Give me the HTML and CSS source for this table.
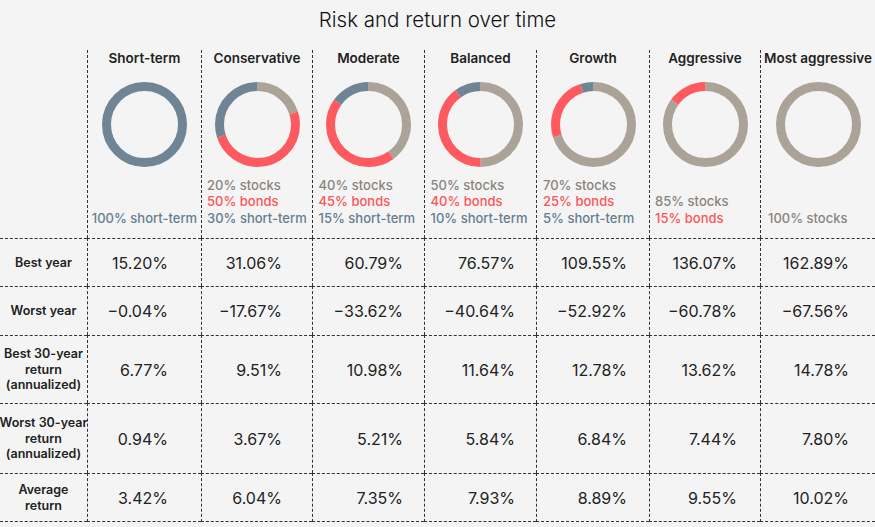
FILE: index.html
```html
<!DOCTYPE html>
<html lang="en">
<head>
<meta charset="utf-8">
<title>Risk and return over time</title>
<link rel="stylesheet" href="styles.css">
</head>
<body>
<div class="chart">
  <h1 class="title">Risk and return over time</h1>

  <div class="row head-row">
    <div class="cell corner"></div>

    <div class="cell mix">
      <div class="mix-name">Short-term</div>
      <svg class="donut" viewBox="0 0 85 85" width="85" height="85">
        <circle class="ring short" cx="42.5" cy="42.5" r="38"/>
      </svg>
      <div class="legend"><div class="legend-box">
        <span class="lg short">100% short-term</span>
      </div></div>
    </div>

    <div class="cell mix">
      <div class="mix-name">Conservative</div>
      <svg class="donut" viewBox="0 0 85 85" width="85" height="85">
        <g transform="rotate(-90 42.5 42.5)">
          <circle class="ring stocks" cx="42.5" cy="42.5" r="38" pathLength="100" stroke-dasharray="20 80" stroke-dashoffset="0"/>
          <circle class="ring bonds" cx="42.5" cy="42.5" r="38" pathLength="100" stroke-dasharray="50 50" stroke-dashoffset="-20"/>
          <circle class="ring short" cx="42.5" cy="42.5" r="38" pathLength="100" stroke-dasharray="30 70" stroke-dashoffset="-70"/>
        </g>
      </svg>
      <div class="legend"><div class="legend-box">
        <span class="lg stocks">20% stocks</span>
        <span class="lg bonds">50% bonds</span>
        <span class="lg short">30% short-term</span>
      </div></div>
    </div>

    <div class="cell mix">
      <div class="mix-name">Moderate</div>
      <svg class="donut" viewBox="0 0 85 85" width="85" height="85">
        <g transform="rotate(-90 42.5 42.5)">
          <circle class="ring stocks" cx="42.5" cy="42.5" r="38" pathLength="100" stroke-dasharray="40 60" stroke-dashoffset="0"/>
          <circle class="ring bonds" cx="42.5" cy="42.5" r="38" pathLength="100" stroke-dasharray="45 55" stroke-dashoffset="-40"/>
          <circle class="ring short" cx="42.5" cy="42.5" r="38" pathLength="100" stroke-dasharray="15 85" stroke-dashoffset="-85"/>
        </g>
      </svg>
      <div class="legend"><div class="legend-box">
        <span class="lg stocks">40% stocks</span>
        <span class="lg bonds">45% bonds</span>
        <span class="lg short">15% short-term</span>
      </div></div>
    </div>

    <div class="cell mix">
      <div class="mix-name">Balanced</div>
      <svg class="donut" viewBox="0 0 85 85" width="85" height="85">
        <g transform="rotate(-90 42.5 42.5)">
          <circle class="ring stocks" cx="42.5" cy="42.5" r="38" pathLength="100" stroke-dasharray="50 50" stroke-dashoffset="0"/>
          <circle class="ring bonds" cx="42.5" cy="42.5" r="38" pathLength="100" stroke-dasharray="40 60" stroke-dashoffset="-50"/>
          <circle class="ring short" cx="42.5" cy="42.5" r="38" pathLength="100" stroke-dasharray="10 90" stroke-dashoffset="-90"/>
        </g>
      </svg>
      <div class="legend"><div class="legend-box">
        <span class="lg stocks">50% stocks</span>
        <span class="lg bonds">40% bonds</span>
        <span class="lg short">10% short-term</span>
      </div></div>
    </div>

    <div class="cell mix">
      <div class="mix-name">Growth</div>
      <svg class="donut" viewBox="0 0 85 85" width="85" height="85">
        <g transform="rotate(-90 42.5 42.5)">
          <circle class="ring stocks" cx="42.5" cy="42.5" r="38" pathLength="100" stroke-dasharray="70 30" stroke-dashoffset="0"/>
          <circle class="ring bonds" cx="42.5" cy="42.5" r="38" pathLength="100" stroke-dasharray="25 75" stroke-dashoffset="-70"/>
          <circle class="ring short" cx="42.5" cy="42.5" r="38" pathLength="100" stroke-dasharray="5 95" stroke-dashoffset="-95"/>
        </g>
      </svg>
      <div class="legend"><div class="legend-box">
        <span class="lg stocks">70% stocks</span>
        <span class="lg bonds">25% bonds</span>
        <span class="lg short">5% short-term</span>
      </div></div>
    </div>

    <div class="cell mix">
      <div class="mix-name">Aggressive</div>
      <svg class="donut" viewBox="0 0 85 85" width="85" height="85">
        <g transform="rotate(-90 42.5 42.5)">
          <circle class="ring stocks" cx="42.5" cy="42.5" r="38" pathLength="100" stroke-dasharray="85 15" stroke-dashoffset="0"/>
          <circle class="ring bonds" cx="42.5" cy="42.5" r="38" pathLength="100" stroke-dasharray="15 85" stroke-dashoffset="-85"/>
        </g>
      </svg>
      <div class="legend"><div class="legend-box">
        <span class="lg stocks">85% stocks</span>
        <span class="lg bonds">15% bonds</span>
      </div></div>
    </div>

    <div class="cell mix">
      <div class="mix-name">Most aggressive</div>
      <svg class="donut" viewBox="0 0 85 85" width="85" height="85">
        <circle class="ring stocks" cx="42.5" cy="42.5" r="38"/>
      </svg>
      <div class="legend"><div class="legend-box">
        <span class="lg stocks">100% stocks</span>
      </div></div>
    </div>
  </div>

  <div class="row data-row r-best">
    <div class="cell label">Best year</div>
    <div class="cell val">15.20%</div>
    <div class="cell val">31.06%</div>
    <div class="cell val">60.79%</div>
    <div class="cell val">76.57%</div>
    <div class="cell val">109.55%</div>
    <div class="cell val">136.07%</div>
    <div class="cell val">162.89%</div>
  </div>

  <div class="row data-row r-worst">
    <div class="cell label">Worst year</div>
    <div class="cell val">−0.04%</div>
    <div class="cell val">−17.67%</div>
    <div class="cell val">−33.62%</div>
    <div class="cell val">−40.64%</div>
    <div class="cell val">−52.92%</div>
    <div class="cell val">−60.78%</div>
    <div class="cell val">−67.56%</div>
  </div>

  <div class="row data-row r-best30">
    <div class="cell label">Best 30-year<br>return<br>(annualized)</div>
    <div class="cell val">6.77%</div>
    <div class="cell val">9.51%</div>
    <div class="cell val">10.98%</div>
    <div class="cell val">11.64%</div>
    <div class="cell val">12.78%</div>
    <div class="cell val">13.62%</div>
    <div class="cell val">14.78%</div>
  </div>

  <div class="row data-row r-worst30">
    <div class="cell label">Worst 30-year<br>return<br>(annualized)</div>
    <div class="cell val">0.94%</div>
    <div class="cell val">3.67%</div>
    <div class="cell val">5.21%</div>
    <div class="cell val">5.84%</div>
    <div class="cell val">6.84%</div>
    <div class="cell val">7.44%</div>
    <div class="cell val">7.80%</div>
  </div>

  <div class="row data-row r-avg">
    <div class="cell label">Average<br>return</div>
    <div class="cell val">3.42%</div>
    <div class="cell val">6.04%</div>
    <div class="cell val">7.35%</div>
    <div class="cell val">7.93%</div>
    <div class="cell val">8.89%</div>
    <div class="cell val">9.55%</div>
    <div class="cell val">10.02%</div>
  </div>
</div>
</body>
</html>
```

FILE: styles.css
```css
html, body {
  margin: 0;
  padding: 0;
  background: #f4f4f4;
}

body {
  font-family: Inter, Lato, "Liberation Sans", sans-serif;
  color: #222;
  width: 875px;
  height: 527px;
  overflow: hidden;
}

.chart {
  display: flex;
  flex-direction: column;
}

.title {
  margin: 0;
  height: 50px;
  box-sizing: border-box;
  padding-top: 8px;
  font-size: 20.5px;
  line-height: 24px;
  font-weight: 300;
  text-align: center;
  color: #111;
}

.row {
  display: grid;
  grid-template-columns: 87px 114px 111px 112px 112px 113px 111px 115px;
}

.cell {
  box-sizing: border-box;
  min-width: 0;
}

/* header */
.head-row {
  height: 188px;
}

.mix {
  border-left: 1px dashed #333;
  display: flex;
  flex-direction: column;
  align-items: center;
}

.mix-name {
  height: 17px;
  line-height: 17px;
  font-size: 13.5px;
  font-weight: 600;
  white-space: nowrap;
  color: #222;
}

.donut {
  display: block;
  margin-top: 15px;
}

.ring {
  fill: none;
  stroke-width: 9;
}
.ring.stocks { stroke: #aba398; }
.ring.bonds  { stroke: #ff5a5f; }
.ring.short  { stroke: #6f8596; }

.legend {
  margin-top: 9px;
  height: 50px;
  display: flex;
  align-items: flex-end;
  justify-content: center;
  width: 100%;
}

.legend-box {
  min-width: 100px;
  display: flex;
  flex-direction: column;
}

.lg {
  font-size: 13px;
  line-height: 16.5px;
  font-weight: 500;
  white-space: nowrap;
}
.lg.stocks { color: #8a847d; }
.lg.bonds  { color: #ff5459; }
.lg.short  { color: #667e90; }

/* data rows */
.data-row .cell {
  border-top: 1px dashed #333;
  display: flex;
  align-items: center;
}

.data-row .val {
  border-left: 1px dashed #333;
  justify-content: flex-end;
  font-size: 16px;
  font-weight: 400;
  color: #222;
  padding-right: 22px;
}

.data-row .val:nth-child(2) { padding-right: 33px; }
.data-row .val:nth-child(3) { padding-right: 30px; }
.data-row .val:nth-child(4) { padding-right: 21px; }
.data-row .val:nth-child(5) { padding-right: 21px; }
.data-row .val:nth-child(6) { padding-right: 22px; }
.data-row .val:nth-child(7) { padding-right: 23px; }
.data-row .val:nth-child(8) { padding-right: 26px; }

.data-row .label {
  justify-content: center;
  text-align: center;
  font-size: 12.5px;
  line-height: 15.5px;
  font-weight: 600;
  white-space: nowrap;
  color: #222;
}

.r-best   { height: 48px; }
.r-worst  { height: 49px; }
.r-best30 { height: 68px; }
.r-worst30 { height: 70px; }
.r-avg    { height: 49px; }
.r-avg .cell { border-bottom: 1px dashed #333; }
```
